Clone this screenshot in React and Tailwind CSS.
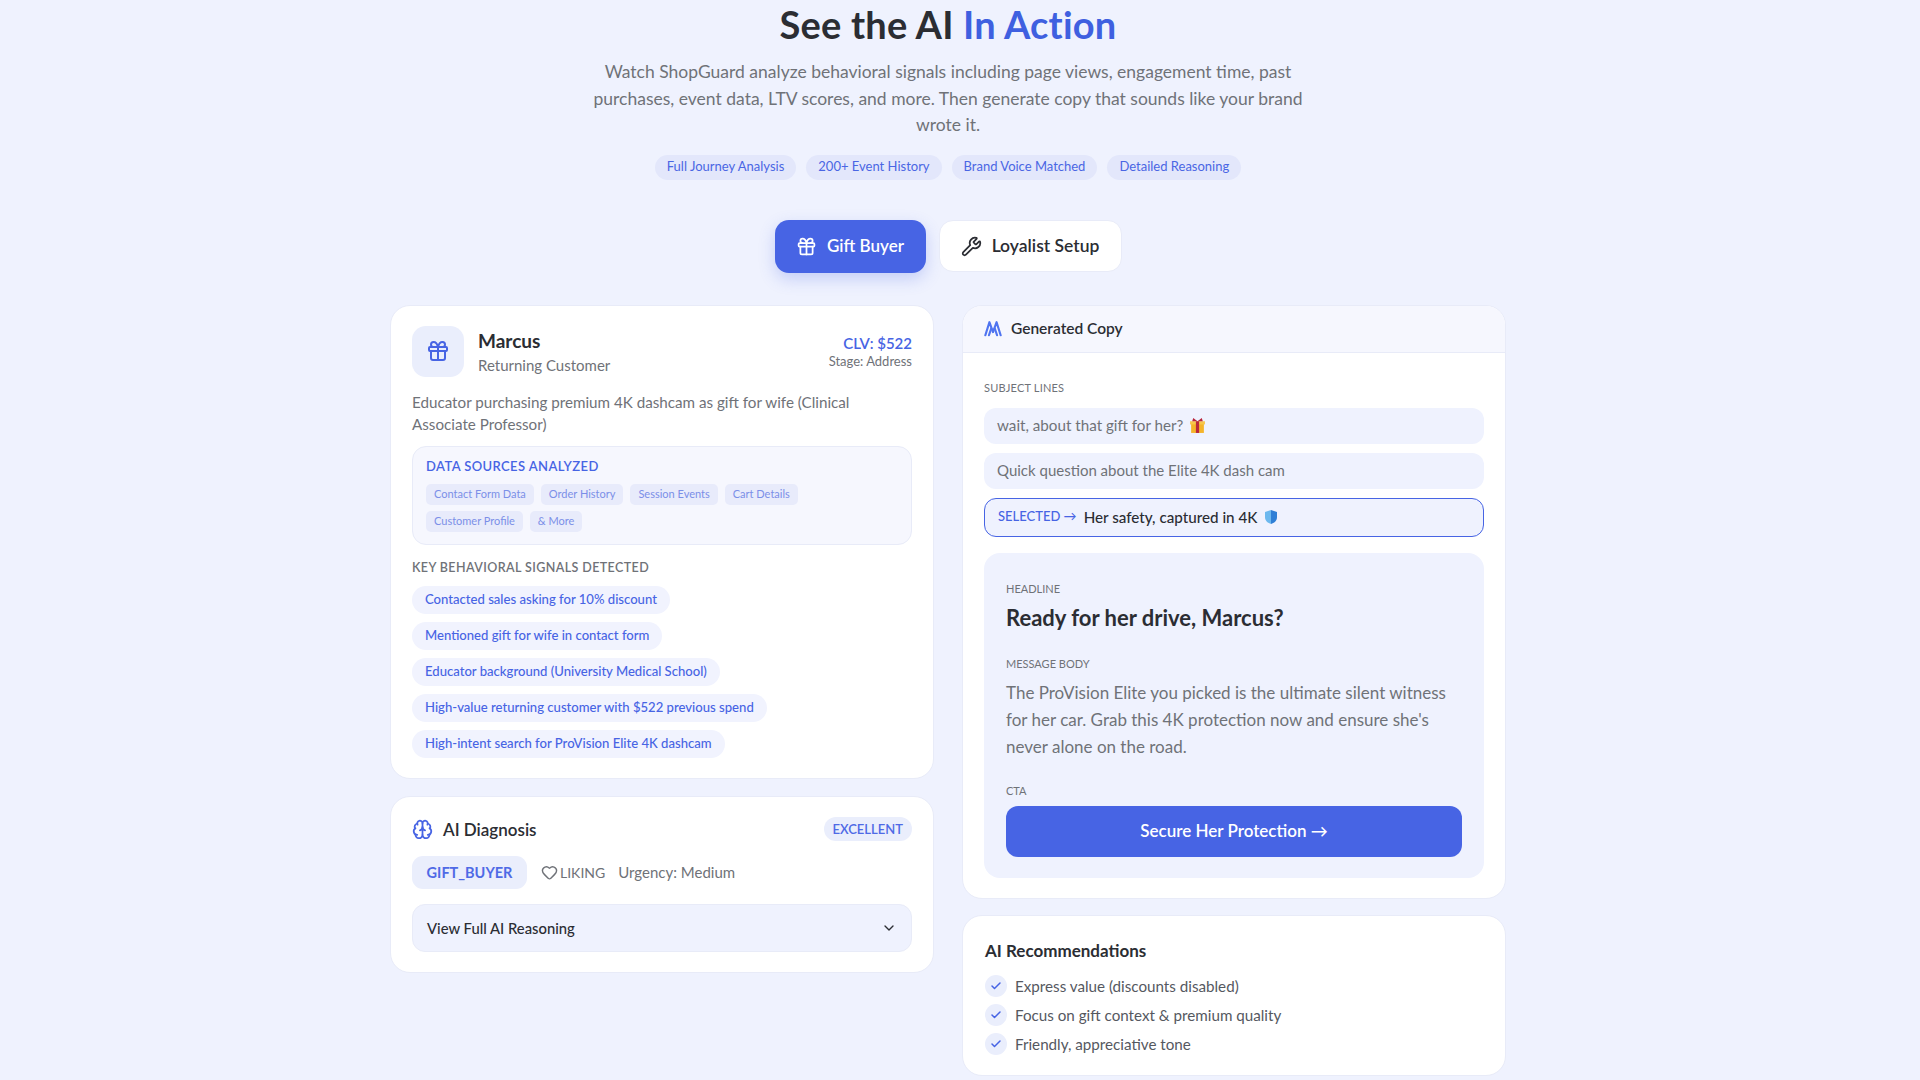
import { Gift, Wrench, Brain, Heart, ChevronDown, Check } from 'lucide-react';

const heroTags = ['Full Journey Analysis', '200+ Event History', 'Brand Voice Matched', 'Detailed Reasoning'];
const sources = ['Contact Form Data', 'Order History', 'Session Events', 'Cart Details', 'Customer Profile', '& More'];
const signals = [
  'Contacted sales asking for 10% discount',
  'Mentioned gift for wife in contact form',
  'Educator background (University Medical School)',
  'High-value returning customer with $522 previous spend',
  'High-intent search for ProVision Elite 4K dashcam',
];
const recommendations = [
  'Express value (discounts disabled)',
  'Focus on gift context & premium quality',
  'Friendly, appreciative tone',
];

function GiftEmoji() {
  return (
    <svg viewBox="0 0 16 16" className="h-[17px] w-[17px]">
      <rect x="2" y="6" width="12" height="9" fill="#f5b42a" />
      <rect x="1" y="4" width="14" height="3" fill="#f7c64a" />
      <rect x="6.5" y="4" width="3" height="11" fill="#b9263c" />
      <path d="M8 4 L4 1 L3 4 Z M8 4 L12 1 L13 4 Z" fill="#b9263c" />
    </svg>
  );
}

function ShieldEmoji() {
  return (
    <svg viewBox="0 0 16 16" className="h-[16px] w-[16px]">
      <path d="M8 1 L14 3 V8 C14 12 11 14 8 15 Z" fill="#2f7fd6" />
      <path d="M8 1 L2 3 V8 C2 12 5 14 8 15 Z" fill="#6cb8ee" />
    </svg>
  );
}

function CopyMark() {
  return (
    <svg viewBox="0 0 20 18" className="h-[17px] w-[18px]" fill="none" stroke="#4f74f0" strokeWidth="2.4" strokeLinejoin="round" strokeLinecap="round">
      <path d="M1.5 16.5 L6 2 L10 13 L14 2 L18.5 16.5" />
      <path d="M5.5 16.5 L8 9 M14.5 16.5 L12 9" />
    </svg>
  );
}

export default function App() {
  return (
    <div className="min-h-screen bg-[#eff2fe] pt-[3px] pr-[24px] pb-[5px] font-[Lato,sans-serif] text-[#2b2d33]">
      <h2 className="text-center text-[38px] leading-[43px] tracking-[0.2px] font-bold">
        See the AI <span className="text-[#3f60e0]">In Action</span>
      </h2>
      <p className="mx-auto mt-[13px] w-[730px] text-center text-[17.5px] leading-[26.5px] text-[#6f7278]">
        Watch ShopGuard analyze behavioral signals including page views, engagement time, past purchases, event data, LTV scores, and more. Then generate copy that sounds like your brand wrote it.
      </p>
      <div className="mt-[16px] flex justify-center gap-[10px]">
        {heroTags.map((tag) => (
          <span key={tag} className="flex h-[25px] items-center rounded-full bg-[#e3e7fb] px-[12px] text-[13px] text-[#4a66e4]">{tag}</span>
        ))}
      </div>

      <div className="mt-[40px] flex items-center justify-center gap-[13px]">
        <button className="flex h-[53px] w-[151px] items-center justify-center gap-[10px] rounded-[14px] bg-[#4764e4] text-[17px] font-semibold text-white shadow-[0_6px_16px_rgba(71,100,228,0.25)]">
          <Gift size={21} />
          Gift Buyer
        </button>
        <button className="flex h-[52px] w-[183px] items-center justify-center gap-[10px] rounded-[14px] border border-[#e8ebf8] bg-white text-[17.5px] font-semibold text-[#2b2d33]">
          <Wrench size={21} />
          Loyalist Setup
        </button>
      </div>

      <div className="mx-auto mt-[32px] grid w-[1116px] grid-cols-2 items-start gap-[28px]">
        <div className="flex flex-col gap-[17px]">
          <div className="rounded-[20px] border border-[#e8ebf8] bg-white px-[21px] pt-[20px] pb-[20px]">
            <div className="flex items-start gap-[14px]">
              <div className="flex h-[51px] w-[52px] items-center justify-center rounded-[14px] bg-[#eaeefc]">
                <Gift size={24} className="text-[#4764e4]" />
              </div>
              <div className="flex-1 pt-[2px]">
                <div className="text-[19px] leading-[26px] font-bold">Marcus</div>
                <div className="text-[15px] leading-[22px] text-[#6f7278]">Returning Customer</div>
              </div>
              <div className="pt-[7px] text-right">
                <div className="text-[15px] leading-[21px] font-semibold text-[#4764e4]">CLV: $522</div>
                <div className="text-[13px] leading-[15px] text-[#6f7278]">Stage: Address</div>
              </div>
            </div>
            <p className="mt-[14px] max-w-[480px] text-[15.2px] leading-[22px] text-[#6f7278]">
              Educator purchasing premium 4K dashcam as gift for wife (Clinical Associate Professor)
            </p>
            <div className="mt-[11px] rounded-[14px] border border-[#e8ebf8] bg-[#f6f7fe] px-[13px] pt-[11px] pb-[12px]">
              <div className="text-[13px] leading-[17px] font-semibold tracking-[0.4px] text-[#4764e4]">DATA SOURCES ANALYZED</div>
              <div className="mt-[9px] flex flex-wrap gap-x-[7px] gap-y-[6px] pr-[40px]">
                {sources.map((source) => (
                  <span key={source} className="flex h-[21px] items-center rounded-[5px] bg-[#e8ebfb] px-[8px] text-[11px] text-[#7b8fe8]">{source}</span>
                ))}
              </div>
            </div>
            <div className="mt-[15px] text-[12.5px] leading-[16px] font-semibold tracking-[0.4px] text-[#6f7278]">KEY BEHAVIORAL SIGNALS DETECTED</div>
            <div className="mt-[10px] flex flex-col items-start gap-[8px]">
              {signals.map((signal) => (
                <span key={signal} className="flex h-[28px] items-center rounded-full bg-[#f1f3fe] px-[13px] text-[13.1px] font-medium text-[#4764e4]">{signal}</span>
              ))}
            </div>
          </div>

          <div className="rounded-[20px] border border-[#e8ebf8] bg-white px-[21px] pt-[20px] pb-[20px]">
            <div className="flex items-center justify-between">
              <div className="flex items-center gap-[10px]">
                <Brain size={21} className="text-[#4764e4]" />
                <span className="text-[17px] font-semibold">AI Diagnosis</span>
              </div>
              <span className="flex h-[24px] items-center rounded-full bg-[#eaeefc] px-[9px] text-[13px] font-semibold text-[#4f6ae6]">EXCELLENT</span>
            </div>
            <div className="mt-[14px] flex items-center text-[15px] text-[#6f7278]">
              <span className="flex h-[33px] w-[115px] items-center justify-center rounded-[11px] bg-[#eaeefc] text-[14.5px] font-bold text-[#4f6ae6]">GIFT_BUYER</span>
              <Heart size={17} className="ml-[14px]" />
              <span className="ml-[2px] text-[14px]">LIKING</span>
              <span className="ml-[13px]">Urgency: Medium</span>
            </div>
            <div className="mt-[15px] flex h-[48px] items-center justify-between rounded-[13px] border border-[#e8ebf8] bg-[#eff2fe] px-[14px] text-[14.8px] font-medium text-[#2b2d33]">
              View Full AI Reasoning
              <ChevronDown size={16} />
            </div>
          </div>
        </div>

        <div className="flex flex-col gap-[16px]">
          <div className="overflow-hidden rounded-[20px] border border-[#e8ebf8] bg-white">
            <div className="flex h-[47px] items-center gap-[9px] border-b border-[#e8ebf8] bg-[#f6f7fe] px-[21px] text-[15.5px] font-semibold">
              <CopyMark />
              Generated Copy
            </div>
            <div className="px-[21px] pt-[28px] pb-[20px]">
              <div className="text-[11px] leading-[14px] tracking-[0.2px] text-[#6f7278]">SUBJECT LINES</div>
              <div className="mt-[13px] flex flex-col gap-[9px]">
                <div className="flex h-[36px] items-center gap-[6px] rounded-[12px] bg-[#eff2fe] px-[13px] text-[15.2px] text-[#6f7278]">
                  wait, about that gift for her? <GiftEmoji />
                </div>
                <div className="flex h-[36px] items-center rounded-[12px] bg-[#eff2fe] px-[13px] text-[15px] text-[#6f7278]">
                  Quick question about the Elite 4K dash cam
                </div>
                <div className="flex h-[39px] items-center gap-[6px] rounded-[12px] border-[1.5px] border-[#4764e4] bg-[#eff2fe] px-[13px] text-[15.2px] font-medium">
                  <span className="mr-[1px] text-[13px] text-[#4764e4]">SELECTED →</span>
                  Her safety, captured in 4K <ShieldEmoji />
                </div>
              </div>
              <div className="mt-[16px] rounded-[16px] bg-[#eff2fe] px-[22px] pt-[29px] pb-[21px]">
                <div className="text-[11px] leading-[14px] text-[#6f7278]">HEADLINE</div>
                <div className="mt-[7px] text-[22px] leading-[30px] font-bold">Ready for her drive, Marcus?</div>
                <div className="mt-[24px] text-[11px] leading-[14px] text-[#6f7278]">MESSAGE BODY</div>
                <p className="mt-[8px] text-[17px] leading-[27px] text-[#6f7278]">
                  The ProVision Elite you picked is the ultimate silent witness for her car. Grab this 4K protection now and ensure she's never alone on the road.
                </p>
                <div className="mt-[24px] text-[11px] leading-[14px] text-[#6f7278]">CTA</div>
                <button className="mt-[8px] flex h-[51px] w-full items-center justify-center rounded-[12px] bg-[#4764e4] text-[17px] font-semibold text-white">
                  Secure Her Protection →
                </button>
              </div>
            </div>
          </div>

          <div className="rounded-[20px] border border-[#e8ebf8] bg-white px-[22px] pt-[24px] pb-[19px]">
            <div className="text-[17px] leading-[22px] font-bold">AI Recommendations</div>
            <div className="mt-[13px] flex flex-col gap-[6.5px]">
              {recommendations.map((item) => (
                <div key={item} className="flex items-center gap-[8px] text-[15.2px] text-[#55585f]">
                  <span className="flex h-[22px] w-[22px] items-center justify-center rounded-full bg-[#eaeefc]">
                    <Check size={12} strokeWidth={3} className="text-[#4764e4]" />
                  </span>
                  {item}
                </div>
              ))}
            </div>
          </div>
        </div>
      </div>
    </div>
  );
}
